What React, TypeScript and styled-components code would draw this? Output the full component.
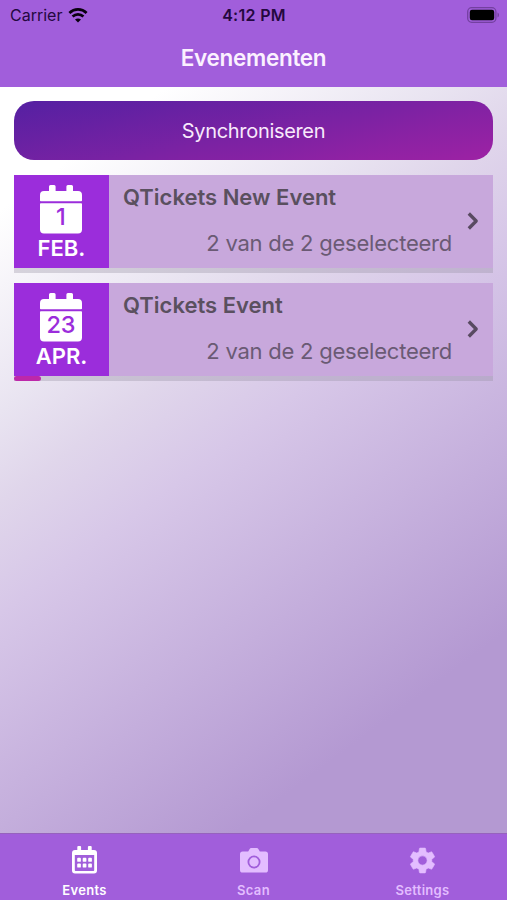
import React from "react";
import styled, { createGlobalStyle } from "styled-components";
import { MdSettings } from "react-icons/md";

const GlobalStyle = createGlobalStyle`
  *, *::before, *::after { box-sizing: border-box; }
  body { margin: 0; font-family: Inter, "Liberation Sans", sans-serif; }
  button { font: inherit; border: 0; padding: 0; }
  svg { display: block; }
`;

const Screen = styled.div`
  width: 507px;
  height: 900px;
  display: flex;
  flex-direction: column;
  overflow: hidden;
`;

const Header = styled.header`
  height: 87px;
  flex: none;
  background: #a15edb;
`;

const StatusBar = styled.div`
  height: 29px;
  padding: 0 7px 0 10px;
  display: grid;
  grid-template-columns: 1fr auto 1fr;
  align-items: center;
  color: #24083f;
`;

const Carrier = styled.div`
  display: flex;
  align-items: center;
  gap: 6px;
  font-size: 16px;
  letter-spacing: 0;
  line-height: 20px;
  padding-top: 1px;
`;

const Clock = styled.div`
  font-size: 16px;
  font-weight: 600;
  letter-spacing: 0.3px;
  line-height: 20px;
  padding-top: 1px;
  margin-right: 2px;
`;

const Battery = styled.div`
  justify-self: end;
`;

const Title = styled.h1`
  margin: 0;
  height: 58px;
  line-height: 58px;
  text-align: center;
  color: #fbf1ff;
  font-size: 22.5px;
  font-weight: 600;
  letter-spacing: -0.3px;
`;

const Content = styled.main`
  flex: 1;
  padding: 14px 14px 0;
  display: flex;
  flex-direction: column;
  background: linear-gradient(
    143.5deg,
    #ffffff 11%,
    #e9e4f1 29%,
    #e0d6eb 37%,
    #d7c7e8 47%,
    #b499d2 82%
  );
`;

const SyncButton = styled.button`
  height: 59px;
  flex: none;
  border-radius: 20px;
  color: #f8e9fc;
  font-size: 20px;
  letter-spacing: -0.32px;
  background: linear-gradient(169deg, #5620a2 2%, #7a22a3 52%, #9c22a4 98%);
`;

const EventList = styled.div`
  margin-top: 15px;
  display: flex;
  flex-direction: column;
  gap: 10px;
`;

const Card = styled.article`
  height: 98px;
`;

const CardBody = styled.div`
  height: 93px;
  display: grid;
  grid-template-columns: 95px 1fr 41px;
  background: #c8a8dc;
  color: #594d60;
`;

const DateBox = styled.div`
  background: #9b2ddb;
  display: flex;
  flex-direction: column;
  align-items: center;
  padding: 10px 0 0;
`;

const CalendarFace = styled.div`
  width: 43px;
  height: 49px;
  padding-right: 1px;
  display: grid;
  > * { grid-area: 1 / 1; }
`;

const Day = styled.span`
  align-self: end;
  text-align: center;
  color: #9b2ddb;
  font-size: 23.5px;
  font-weight: 500;
  line-height: 34px;
`;

const Month = styled.span`
  color: #fff;
  font-size: 22px;
  font-weight: 600;
  line-height: 28px;
`;

const Details = styled.div`
  padding: 7px 0 0 14px;
  display: flex;
  flex-direction: column;
  gap: 16px;
`;

const EventName = styled.h2`
  margin: 0;
  color: #5a505f;
  font-size: 22px;
  font-weight: 600;
  line-height: 30px;
  white-space: nowrap;
`;

const Selected = styled.p`
  margin: 0;
  color: #6a5a74;
  font-size: 22px;
  line-height: 30px;
  letter-spacing: -0.23px;
  text-align: right;
  white-space: nowrap;
`;

const Arrow = styled.div`
  display: grid;
  place-items: center;
  padding-bottom: 2px;
`;

const Track = styled.div`
  height: 5px;
  background: rgba(150, 145, 160, 0.34);
`;

const Progress = styled.div<{ $percent: number }>`
  width: ${(p) => p.$percent}%;
  height: 5px;
  border-radius: 3px;
  background: #bd28aa;
`;

const TabBar = styled.nav`
  height: 67px;
  flex: none;
  display: grid;
  grid-template-columns: repeat(3, 1fr);
  background: #a15edb;
  border-top: 1px solid #9662bd;
`;

const Tab = styled.button<{ $active?: boolean }>`
  background: none;
  color: ${(p) => (p.$active ? "#fff" : "#e3bdff")};
  display: flex;
  flex-direction: column;
  align-items: center;
  padding-top: 10px;
  font-size: 13px;
  font-weight: 600;
  line-height: 18px;
  letter-spacing: 0.3px;
`;

const TabIcon = styled.span`
  height: 32px;
  margin-bottom: 5px;
  display: flex;
  align-items: center;
`;

const GearIcon = styled(MdSettings)`
  width: 31px;
  height: 31px;
  margin-right: 1px;

  path:last-child {
    stroke: currentColor;
    stroke-width: 0.5px;
  }

  path:first-child {
    stroke: none;
  }
`;

const WifiIcon = () => (
  <svg width="20" height="15" viewBox="0 0 21 16" fill="none" stroke="#09000f">
    <path d="M1.3 5.3C6.5.3 14.5.3 19.7 5.3" strokeWidth="2.9" />
    <path d="M4.7 9.1c3.3-3.1 8.3-3.1 11.6 0" strokeWidth="2.8" />
    <path d="M10.5 15.5 7.3 12.3c1.8-1.6 4.6-1.6 6.4 0z" fill="#09000f" stroke="none" />
  </svg>
);

const BatteryIcon = () => (
  <svg width="33" height="16" viewBox="0 0 33 16">
    <rect x=".7" y=".7" width="28.2" height="14.6" rx="4" fill="none" stroke="#7440a0" strokeWidth="1.3" />
    <rect x="2.8" y="2.8" width="24.4" height="10.4" rx="2.2" fill="#000" />
    <path d="M30.5 5.5c2 .8 2 4.2 0 5z" fill="#7440a0" />
  </svg>
);

const CalendarShape = () => (
  <svg width="42" height="49" viewBox="0 0 42 49" fill="#fff">
    <path d="M0 15.5V10a4 4 0 0 1 4-4h5V1.5A1.5 1.5 0 0 1 10.5 0h3.6a1.5 1.5 0 0 1 1.5 1.5V6h10.8V1.5A1.5 1.5 0 0 1 27.9 0h3.6A1.5 1.5 0 0 1 33 1.5V6h5a4 4 0 0 1 4 4v5.5a.8.8 0 0 1-.8.8H.8a.8.8 0 0 1-.8-.8z" />
    <path d="M.8 18.300h40.400a.8.8 0 0 1 .8.8V44.500a4 4 0 0 1-4 4H4a4 4 0 0 1-4-4V19.100A.8.8 0 0 1 .8 18.300z" />
  </svg>
);

const ChevronIcon = () => (
  <svg width="12" height="18" viewBox="0 0 12 18" fill="none" stroke="#594a61" strokeWidth="3.3">
    <path d="m1.8 1.5 7.4 7.5-7.4 7.5" strokeLinejoin="round" />
  </svg>
);

const EventsIcon = () => (
  <svg width="25" height="28" viewBox="0 0 25 28" fill="currentColor">
    <path
      fillRule="evenodd"
      d="M5.3 4V1a1 1 0 0 1 1-1h1.8a1 1 0 0 1 1 1v3h6.8V1a1 1 0 0 1 1-1h1.8a1 1 0 0 1 1 1v3H22a3 3 0 0 1 3 3v17.5a3 3 0 0 1-3 3H3a3 3 0 0 1-3-3V7a3 3 0 0 1 3-3zM2.8 9v15.2c0 .4.3.7.7.7h18c.4 0 .7-.3.7-.7V9z"
    />
    {[11.8, 17.6].map((y) =>
      [5.2, 10.7, 16.2].map((x) => (
        <rect key={`${x}-${y}`} x={x} y={y} width="3.7" height="4" rx=".9" />
      ))
    )}
  </svg>
);

const CameraIcon = () => (
  <svg width="28" height="25" viewBox="0 0 28 25" fill="currentColor">
    <path
      fillRule="evenodd"
      d="m8.2 3.5 1.3-2.3C9.9.4 10.5 0 11.3 0h5.4c.8 0 1.4.4 1.8 1.2l1.3 2.3h5.6A2.6 2.6 0 0 1 28 6.1v15.8a2.6 2.6 0 0 1-2.6 2.6H2.6A2.6 2.6 0 0 1 0 21.9V6.1a2.6 2.6 0 0 1 2.6-2.6zM14 7.5a6.500 6.500 0 1 0 0 13 6.500 6.500 0 0 0 0-13z"
    />
    <circle cx="14" cy="14" r="4.7" />
  </svg>
);

const events = [
  { name: "QTickets New Event", day: "1", month: "FEB.", percent: 0 },
  { name: "QTickets Event", day: "23", month: "APR.", percent: 5.7 },
];

export default function App() {
  return (
    <>
      <GlobalStyle />
      <Screen>
        <Header>
          <StatusBar>
            <Carrier>
              Carrier <WifiIcon />
            </Carrier>
            <Clock>4:12 PM</Clock>
            <Battery>
              <BatteryIcon />
            </Battery>
          </StatusBar>
          <Title>Evenementen</Title>
        </Header>
        <Content>
          <SyncButton>Synchroniseren</SyncButton>
          <EventList>
            {events.map((event) => (
              <Card key={event.name}>
                <CardBody>
                  <DateBox>
                    <CalendarFace>
                      <CalendarShape />
                      <Day>{event.day}</Day>
                    </CalendarFace>
                    <Month>{event.month}</Month>
                  </DateBox>
                  <Details>
                    <EventName>{event.name}</EventName>
                    <Selected>2 van de 2 geselecteerd</Selected>
                  </Details>
                  <Arrow>
                    <ChevronIcon />
                  </Arrow>
                </CardBody>
                <Track>
                  <Progress $percent={event.percent} />
                </Track>
              </Card>
            ))}
          </EventList>
        </Content>
        <TabBar>
          <Tab $active>
            <TabIcon>
              <EventsIcon />
            </TabIcon>
            Events
          </Tab>
          <Tab>
            <TabIcon>
              <CameraIcon />
            </TabIcon>
            Scan
          </Tab>
          <Tab>
            <TabIcon>
              <GearIcon />
            </TabIcon>
            Settings
          </Tab>
        </TabBar>
      </Screen>
    </>
  );
}
